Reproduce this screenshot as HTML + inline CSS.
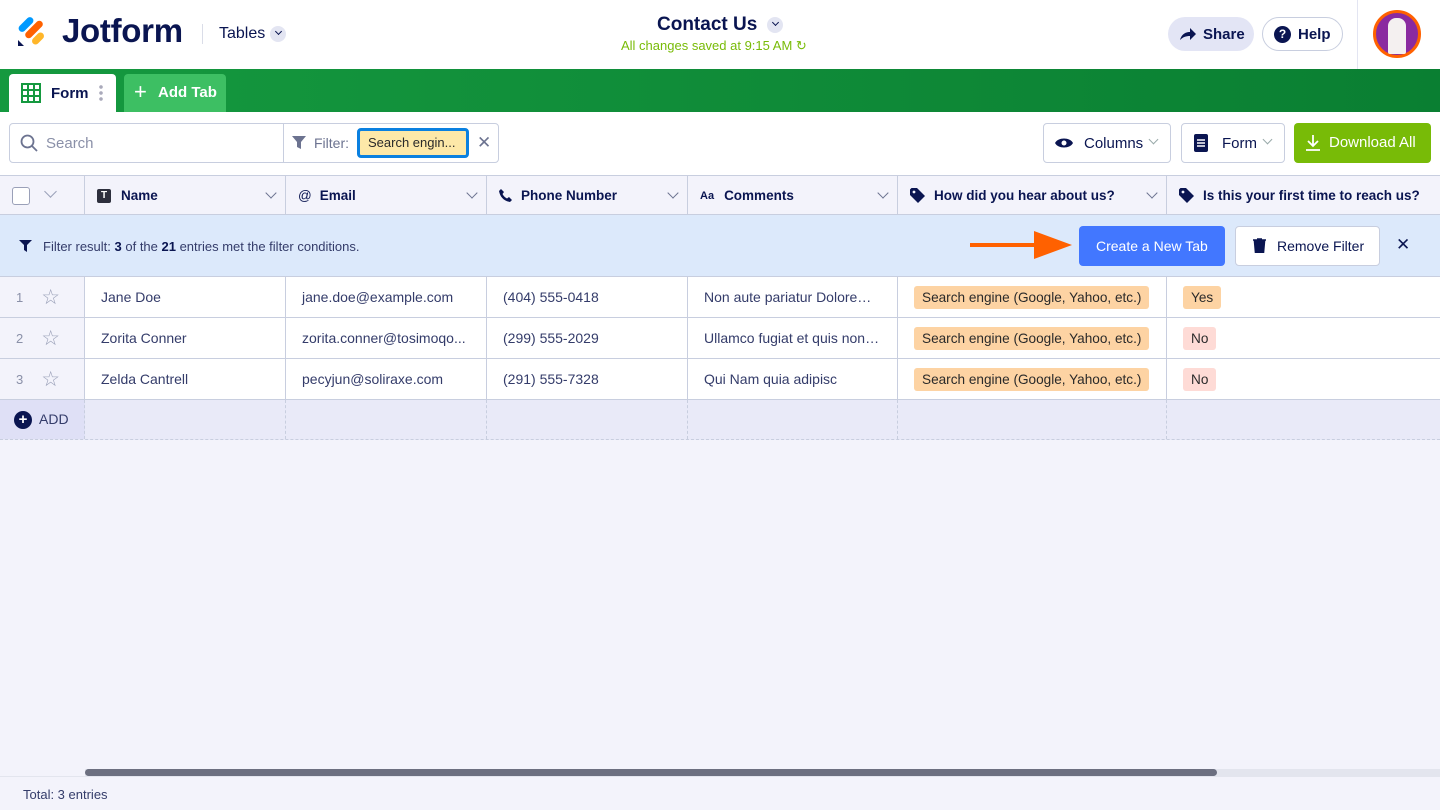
<!DOCTYPE html>
<html><head><meta charset="utf-8"><style>
*{box-sizing:border-box;margin:0;padding:0}
body{width:1440px;height:810px;overflow:hidden;font-family:"Liberation Sans",sans-serif;background:#f3f3fb;color:#0a1551;position:relative}
.a{position:absolute}
.top{left:0;top:0;width:1440px;height:69px;background:#fff}
.green{left:0;top:69px;width:1440px;height:43px;background:linear-gradient(90deg,#15993f,#0a7f32)}
.tb{left:0;top:112px;width:1440px;height:63px;background:#fff}
.hdr{left:0;top:175px;width:1440px;height:40px;background:#f3f3fb;border-top:1px solid #c8cedf;border-bottom:1px solid #c8cedf}
.hc{position:absolute;top:0;height:39px;border-right:1px solid #c8cedf;font-size:13.5px;font-weight:bold;display:flex;align-items:center;padding-left:12px;color:#0a1551;white-space:nowrap}
.chev{position:absolute;right:10px;top:13px;width:8px;height:8px;border-right:1.6px solid #6c7390;border-bottom:1.6px solid #6c7390;transform:rotate(45deg)}
.fb{left:0;top:215px;width:1440px;height:62px;background:#dce9fb;border-bottom:1px solid #c8cedf}
.row{position:absolute;left:0;width:1440px;height:41px;background:#fff;border-bottom:1px solid #c8cedf}
.c{position:absolute;top:0;height:40px;border-right:1px solid #c8cedf;font-size:14px;color:#343c6a;display:flex;align-items:center;padding-left:16px;white-space:nowrap}
.tag{background:#fdd3a3;padding:4px 8px;border-radius:3px;color:#2a2a2a;font-size:13.6px}
.btn{position:absolute;border:1px solid #c8cedf;border-radius:4px;background:#fff;font-size:15px;display:flex;align-items:center;color:#0a1551}
.ti{margin-right:9px}
</style></head><body>
<div class="a top">
 <svg class="a" style="left:18px;top:15px" width="30" height="32" viewBox="0 0 30 32"><rect x="-1" y="6" width="18" height="7" rx="3.5" fill="#0099ff" transform="rotate(-45 8 9.5)"/><rect x="5" y="11" width="22" height="7" rx="3.5" fill="#ff6100" transform="rotate(-45 16 14.5)"/><rect x="13" y="20" width="14" height="7" rx="3.5" fill="#ffb629" transform="rotate(-45 20 23.5)"/><path d="M0 31 L0 25 L6 31Z" fill="#0a1551"/></svg>
 <div class="a" style="left:62px;top:12px;font-size:33px;font-weight:bold;letter-spacing:-0.3px">Jotform</div>
 <div class="a" style="left:202px;top:24px;width:1px;height:20px;background:#dadde8"></div>
 <div class="a" style="left:219px;top:25px;font-size:16px">Tables</div>
 <div class="a" style="left:270px;top:26px;width:16px;height:16px;border-radius:50%;background:#e3e5f2"><div class="chev" style="right:5px;top:3px;width:5px;height:5px;border-color:#0a1551"></div></div>
 <div class="a" style="left:657px;top:14px;font-size:19px;font-weight:bold">Contact Us</div>
 <div class="a" style="left:767px;top:17px;width:16px;height:16px;border-radius:50%;background:#e3e5f2"><div class="chev" style="right:5px;top:3px;width:5px;height:5px;border-color:#0a1551"></div></div>
 <div class="a" style="left:621px;top:38px;font-size:13px;color:#78bb07">All changes saved at 9:15 AM ↻</div>
 <div class="a" style="left:1168px;top:17px;width:86px;height:34px;border-radius:17px;background:#e3e5f5;font-size:15px;font-weight:bold;padding:9px 0 0 35px">Share</div>
 <svg class="a" style="left:1179px;top:27px" width="18" height="14" viewBox="0 0 18 14"><path d="M1 13 C3 6 8 5 11 5 V1 L17 7 L11 13 V9 C7 9 4 10 1 13Z" fill="#0a1551"/></svg>
 <div class="a" style="left:1262px;top:17px;width:81px;height:34px;border-radius:17px;border:1px solid #c8cedf;font-size:15px;font-weight:bold;padding:8px 0 0 35px">Help</div>
 <div class="a" style="left:1274px;top:26px;width:17px;height:17px;border-radius:50%;background:#0a1551;color:#fff;font-size:12px;font-weight:bold;text-align:center;line-height:17px">?</div>
 <div class="a" style="left:1357px;top:0;width:1px;height:69px;background:#e3e5f2"></div>
 <div class="a" style="left:1373px;top:10px;width:48px;height:48px;border-radius:50%;background:#8a2aa0;border:3px solid #ff6100"></div>
 <div class="a" style="left:1388px;top:18px;width:18px;height:36px;border-radius:8px 8px 2px 2px;background:#f4f0f0"></div>
</div>
<div class="a green">
 <div class="a" style="left:9px;top:5px;width:107px;height:38px;background:#fff;border-radius:4px 4px 0 0"></div>
 <svg class="a" style="left:21px;top:14px" width="20" height="20" viewBox="0 0 20 20"><rect x="1" y="1" width="18" height="18" fill="none" stroke="#15993f" stroke-width="2"/><path d="M7 1V19M13 1V19M1 7H19M1 13H19" stroke="#15993f" stroke-width="2"/></svg>
 <div class="a" style="left:51px;top:16px;font-size:15px;font-weight:bold;color:#0a1551">Form</div>
 <div class="a" style="left:99px;top:15px;width:4px;height:18px;background:radial-gradient(circle,#aab 1.6px,transparent 2px) 0 0/4px 6px"></div>
 <div class="a" style="left:124px;top:5px;width:102px;height:38px;background:#3dbf63;border-radius:4px 4px 0 0;color:#fff;font-size:15px;font-weight:bold;padding:10px 0 0 34px">Add Tab</div>
 <div class="a" style="left:134px;top:13px;color:#fff;font-size:22px;line-height:20px">+</div>
</div>
<div class="a tb">
 <div class="a" style="left:9px;top:11px;width:490px;height:40px;border:1px solid #c8cedf;border-radius:4px;background:#fff"></div>
 <svg class="a" style="left:20px;top:22px" width="18" height="18" viewBox="0 0 18 18"><circle cx="7.5" cy="7.5" r="6" fill="none" stroke="#6c7390" stroke-width="1.8"/><path d="M12 12L17 17" stroke="#6c7390" stroke-width="1.8"/></svg>
 <div class="a" style="left:46px;top:23px;font-size:15px;color:#8a90a8">Search</div>
 <div class="a" style="left:283px;top:11px;width:1px;height:40px;background:#c8cedf"></div>
 <svg class="a" style="left:292px;top:24px" width="14" height="14" viewBox="0 0 14 14"><path d="M0 0H14L9 6V13L5 11V6Z" fill="#6c7390"/></svg>
 <div class="a" style="left:314px;top:23px;font-size:14px;color:#6c7390">Filter:</div>
 <div class="a" style="left:357px;top:16px;width:112px;height:30px;border:3px solid #0a80e0;border-radius:4px;background:#fde8a8;font-size:13px;padding:4px 0 0 8px;color:#2a2a2a">Search engin...</div>
 <div class="a" style="left:477px;top:21px;font-size:17px;color:#6c7390">✕</div>
 <div class="btn" style="left:1043px;top:11px;width:128px;height:40px;padding-left:40px">Columns</div>
 <svg class="a" style="left:1055px;top:25px" width="18" height="12" viewBox="0 0 18 12"><path d="M0 6C3 0 15 0 18 6C15 12 3 12 0 6Z" fill="#0a1551"/><circle cx="9" cy="6" r="2.5" fill="#fff"/></svg>
 <div class="chev" style="left:1150px;top:24px;width:7px;height:7px;border-color:#9aa"></div>
 <div class="btn" style="left:1181px;top:11px;width:104px;height:40px;padding-left:40px">Form</div>
 <svg class="a" style="left:1194px;top:22px" width="14" height="18" viewBox="0 0 14 18"><rect width="14" height="18" rx="2" fill="#0a1551"/><path d="M3 6H11M3 9H11M3 12H11" stroke="#fff" stroke-width="1.5"/></svg>
 <div class="chev" style="left:1264px;top:24px;width:7px;height:7px;border-color:#9aa"></div>
 <div class="a" style="left:1294px;top:11px;width:137px;height:40px;background:#78bb07;border-radius:4px;color:#fff;font-size:15px;padding:11px 0 0 35px">Download All</div>
 <svg class="a" style="left:1306px;top:23px" width="14" height="16" viewBox="0 0 14 16"><path d="M7 0V10M2 6L7 11L12 6M0 15H14" stroke="#fff" stroke-width="1.8" fill="none"/></svg>
</div>
<div class="a hdr">
 <div class="hc" style="left:0;width:85px"><div style="width:18px;height:18px;border:1.5px solid #9aa0b8;border-radius:3px;background:#fff"></div><div class="chev" style="left:46px;right:auto;top:11px;width:9px;height:9px;border-color:#9aa0b8"></div></div>
 <div class="hc" style="left:85px;width:201px"><span style="display:inline-block;width:14px;height:14px;background:#2d2f3d;border-radius:2px;color:#fff;font-size:10px;text-align:center;line-height:14px;margin-right:10px">T</span>Name<div class="chev"></div></div>
 <div class="hc" style="left:286px;width:201px"><span style="font-weight:normal;margin-right:8px">@</span>Email<div class="chev"></div></div>
 <div class="hc" style="left:487px;width:201px"><svg class="ti" width="13" height="13" viewBox="0 0 13 13"><path d="M2 0L5 3L3.5 5C4.5 7 6 8.5 8 9.5L10 8L13 11L11 13C5 12 1 8 0 2Z" fill="#0a1551"/></svg>Phone Number<div class="chev"></div></div>
 <div class="hc" style="left:688px;width:210px"><span style="font-size:11px;margin-right:10px">Aa</span>Comments<div class="chev"></div></div>
 <div class="hc" style="left:898px;width:269px"><svg class="ti" width="15" height="15" viewBox="0 0 15 15"><path d="M0 1.5V7L8 15L15 8L7 0H1.5Z" fill="#0a1551"/><circle cx="4" cy="4" r="1.4" fill="#f3f3fb"/></svg>How did you hear about us?<div class="chev"></div></div>
 <div class="hc" style="left:1167px;width:300px;border:none"><svg class="ti" width="15" height="15" viewBox="0 0 15 15"><path d="M0 1.5V7L8 15L15 8L7 0H1.5Z" fill="#0a1551"/><circle cx="4" cy="4" r="1.4" fill="#f3f3fb"/></svg>Is this your first time to reach us?</div>
</div>
<div class="a fb">
 <svg class="a" style="left:19px;top:25px" width="13" height="12" viewBox="0 0 13 12"><path d="M0 0H13L8 5V12L5 10V5Z" fill="#0a1551"/></svg>
 <div class="a" style="left:43px;top:24px;font-size:13px;color:#343c6a">Filter result: <b style="color:#0a1551">3</b> of the <b style="color:#0a1551">21</b> entries met the filter conditions.</div>
 <svg class="a" style="left:968px;top:14px" width="106" height="32" viewBox="0 0 106 32"><path d="M2 14H66V2L104 16L66 30V18H2Z" fill="#ff6100"/></svg>
 <div class="a" style="left:1079px;top:11px;width:146px;height:40px;background:#4277ff;border-radius:4px;color:#fff;font-size:14px;padding:12px 0 0 17px">Create a New Tab</div>
 <div class="btn" style="left:1235px;top:11px;width:145px;height:40px;font-size:14px;padding-left:41px">Remove Filter</div>
 <svg class="a" style="left:1253px;top:23px" width="13" height="15" viewBox="0 0 13 15"><path d="M0 2H13M4 1H9M1.5 3.5H11.5L10.5 15H2.5Z" stroke="#0a1551" stroke-width="1.5" fill="#0a1551"/></svg>
 <div class="a" style="left:1396px;top:20px;font-size:17px;color:#0a1551">✕</div>
</div>
<div class="row" style="top:277px">
 <div class="c" style="left:0;width:85px;background:#f3f3fb;color:#8a90a8;font-size:13px">1<span style="margin-left:18px;font-size:21px;color:#9aa0b8">☆</span></div>
 <div class="c" style="left:85px;width:201px">Jane Doe</div><div class="c" style="left:286px;width:201px">jane.doe@example.com</div><div class="c" style="left:487px;width:201px">(404) 555-0418</div><div class="c" style="left:688px;width:210px">Non aute pariatur Dolore…</div><div class="c" style="left:898px;width:269px"><span class="tag">Search engine (Google, Yahoo, etc.)</span></div><div class="c" style="left:1167px;width:273px;border:none"><span class="tag">Yes</span></div>
</div>
<div class="row" style="top:318px">
 <div class="c" style="left:0;width:85px;background:#f3f3fb;color:#8a90a8;font-size:13px">2<span style="margin-left:18px;font-size:21px;color:#9aa0b8">☆</span></div>
 <div class="c" style="left:85px;width:201px">Zorita Conner</div><div class="c" style="left:286px;width:201px">zorita.conner@tosimoqo...</div><div class="c" style="left:487px;width:201px">(299) 555-2029</div><div class="c" style="left:688px;width:210px">Ullamco fugiat et quis non…</div><div class="c" style="left:898px;width:269px"><span class="tag">Search engine (Google, Yahoo, etc.)</span></div><div class="c" style="left:1167px;width:273px;border:none"><span class="tag" style="background:#fedbd6">No</span></div>
</div>
<div class="row" style="top:359px">
 <div class="c" style="left:0;width:85px;background:#f3f3fb;color:#8a90a8;font-size:13px">3<span style="margin-left:18px;font-size:21px;color:#9aa0b8">☆</span></div>
 <div class="c" style="left:85px;width:201px">Zelda Cantrell</div><div class="c" style="left:286px;width:201px">pecyjun@soliraxe.com</div><div class="c" style="left:487px;width:201px">(291) 555-7328</div><div class="c" style="left:688px;width:210px">Qui Nam quia adipisc</div><div class="c" style="left:898px;width:269px"><span class="tag">Search engine (Google, Yahoo, etc.)</span></div><div class="c" style="left:1167px;width:273px;border:none"><span class="tag" style="background:#fedbd6">No</span></div>
</div>
<div class="a" style="left:0;top:400px;width:1440px;height:40px;background:#e9eaf8;border-bottom:1px dashed #c8cedf">
 <div class="a" style="left:0;top:0;width:85px;height:39px;background:#dfe0f6;border-right:1px dashed #c8cedf"></div>
 <div class="a" style="left:14px;top:11px;width:18px;height:18px;border-radius:50%;background:#0a1551;color:#fff;font-size:15px;font-weight:bold;text-align:center;line-height:18px">+</div>
 <div class="a" style="left:39px;top:11px;font-size:14px;color:#343c6a">ADD</div>
 <div class="a" style="left:285px;top:0;height:39px;border-left:1px dashed #c8cedf"></div>
 <div class="a" style="left:486px;top:0;height:39px;border-left:1px dashed #c8cedf"></div>
 <div class="a" style="left:687px;top:0;height:39px;border-left:1px dashed #c8cedf"></div>
 <div class="a" style="left:897px;top:0;height:39px;border-left:1px dashed #c8cedf"></div>
 <div class="a" style="left:1166px;top:0;height:39px;border-left:1px dashed #c8cedf"></div>
</div>
<div class="a" style="left:85px;top:769px;width:1355px;height:7px;background:#e3e5ee"></div>
<div class="a" style="left:85px;top:769px;width:1132px;height:7px;background:#6c6f80;border-radius:4px"></div>
<div class="a" style="left:0;top:776px;width:1440px;height:34px;background:#f3f3fb;border-top:1px solid #e3e5ee;font-size:13px;color:#343c6a;padding:10px 0 0 23px">Total: 3 entries</div>
</body></html>
